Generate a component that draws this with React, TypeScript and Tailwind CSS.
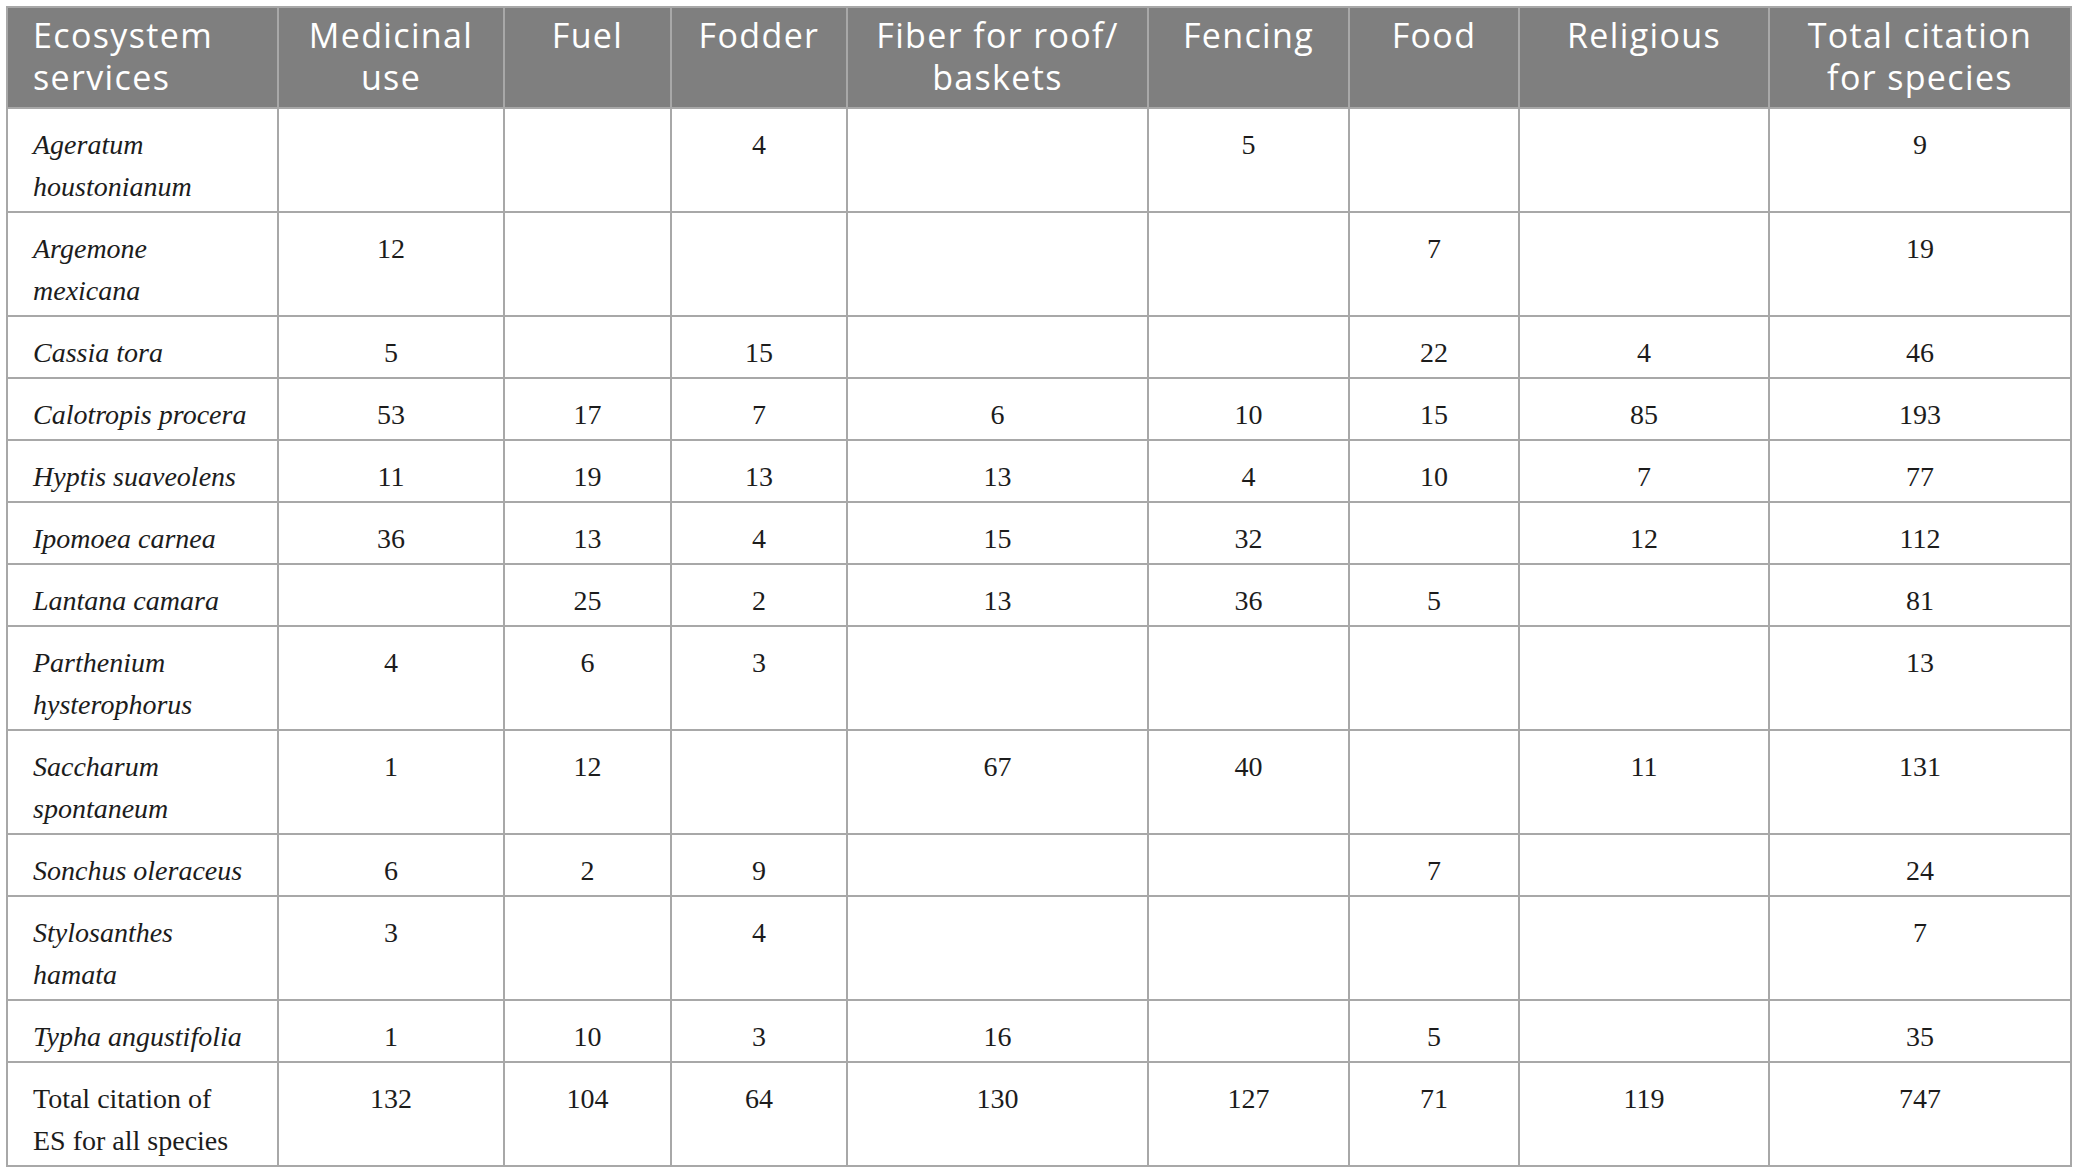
import type { ReactNode } from "react";

const HEADERS = [
  "Medicinal use",
  "Fuel",
  "Fodder",
  "Fiber for roof/ baskets",
  "Fencing",
  "Food",
  "Religious",
  "Total citation for species",
];

const COL_WIDTHS = ["w-[271px]", "w-[226px]", "w-[167px]", "w-[176px]", "w-[301px]", "w-[201px]", "w-[170px]", "w-[250px]", "w-[302px]"];

type Row = { key: string; name: ReactNode; italic: boolean; values: (number | null)[] };

const ROWS: Row[] = [
  { key: "ager", name: "Ageratum houstonianum", italic: true, values: [null, null, 4, null, 5, null, null, 9] },
  { key: "arge", name: "Argemone mexicana", italic: true, values: [12, null, null, null, null, 7, null, 19] },
  { key: "cass", name: "Cassia tora", italic: true, values: [5, null, 15, null, null, 22, 4, 46] },
  { key: "calo", name: "Calotropis procera", italic: true, values: [53, 17, 7, 6, 10, 15, 85, 193] },
  { key: "hypt", name: "Hyptis suaveolens", italic: true, values: [11, 19, 13, 13, 4, 10, 7, 77] },
  { key: "ipom", name: "Ipomoea carnea", italic: true, values: [36, 13, 4, 15, 32, null, 12, 112] },
  { key: "lant", name: "Lantana camara", italic: true, values: [null, 25, 2, 13, 36, 5, null, 81] },
  { key: "part", name: "Parthenium hysterophorus", italic: true, values: [4, 6, 3, null, null, null, null, 13] },
  { key: "sacc", name: "Saccharum spontaneum", italic: true, values: [1, 12, null, 67, 40, null, 11, 131] },
  { key: "sonc", name: "Sonchus oleraceus", italic: true, values: [6, 2, 9, null, null, 7, null, 24] },
  { key: "styl", name: "Stylosanthes hamata", italic: true, values: [3, null, 4, null, null, null, null, 7] },
  { key: "typh", name: "Typha angustifolia", italic: true, values: [1, 10, 3, 16, null, 5, null, 35] },
  {
    key: "total",
    name: (
      <>
        Total citation of
        <br />
        ES for all species
      </>
    ),
    italic: false,
    values: [132, 104, 64, 130, 127, 71, 119, 747],
  },
];

export default function App() {
  return (
    <div className="min-h-screen bg-white pl-[6px] pt-[6px]">
      <table className="w-[2064px] table-fixed border-collapse font-['Liberation_Serif',serif] text-[28px] leading-[42px] text-[#1c1c1c]">
        <colgroup>
          {COL_WIDTHS.map((w, i) => (
            <col key={i} className={w} />
          ))}
        </colgroup>
        <thead>
          <tr className="bg-[#7f7f7f] font-['Open_Sans',sans-serif] text-[34px] leading-[42px] tracking-[0.04em] text-white">
            <th className="border-2 border-[#a8a8a8] pb-[9px] pl-[25px] pr-3 pt-[6px] text-left align-top font-normal">
              Ecosystem services
            </th>
            {HEADERS.map((h) => (
              <th
                key={h}
                className="border-2 border-[#a8a8a8] px-3 pb-[9px] pt-[6px] text-center align-top font-normal"
              >
                {h}
              </th>
            ))}
          </tr>
        </thead>
        <tbody>
          {ROWS.map((r) => (
            <tr key={r.key}>
              <td
                className={`border-2 border-[#a8a8a8] pb-[3px] pl-[25px] pr-6 pt-[15px] text-left align-top ${
                  r.italic ? "italic" : ""
                }`}
              >
                {r.name}
              </td>
              {r.values.map((v, i) => (
                <td key={i} className="border-2 border-[#a8a8a8] px-2 pb-[3px] pt-[15px] text-center align-top">
                  {v ?? ""}
                </td>
              ))}
            </tr>
          ))}
        </tbody>
      </table>
    </div>
  );
}
